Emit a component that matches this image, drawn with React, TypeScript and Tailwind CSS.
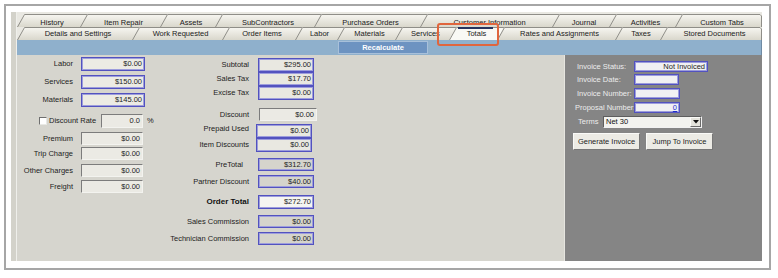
import React from "react";

const FONT = "font-['Liberation_Sans',Arial,sans-serif]";

type TabDef = { label: string; w: number; cls: string };

const ROW1: TabDef[] = [
  { label: "History", w: 63, cls: "w-[63px]" },
  { label: "Item Repair", w: 80, cls: "w-[80px]" },
  { label: "Assets", w: 55, cls: "w-[55px]" },
  { label: "SubContractors", w: 99, cls: "w-[99px]" },
  { label: "Purchase Orders", w: 106, cls: "w-[106px]" },
  { label: "Customer Information", w: 132, cls: "w-[132px]" },
  { label: "Journal", w: 57, cls: "w-[57px]" },
  { label: "Activities", w: 66, cls: "w-[66px]" },
  { label: "Custom Tabs", w: 87, cls: "w-[87px]" },
];

const ROW2: TabDef[] = [
  { label: "Details and Settings", w: 115, cls: "w-[115px]" },
  { label: "Work Requested", w: 90, cls: "w-[90px]" },
  { label: "Order Items", w: 73, cls: "w-[73px]" },
  { label: "Labor", w: 42, cls: "w-[42px]" },
  { label: "Materials", w: 58, cls: "w-[58px]" },
  { label: "Services", w: 54, cls: "w-[54px]" },
  { label: "Totals", w: 48, cls: "w-[48px]" },
  { label: "Rates and Assignments", w: 118, cls: "w-[118px]" },
  { label: "Taxes", w: 45, cls: "w-[45px]" },
  { label: "Stored Documents", w: 102, cls: "w-[102px]" },
];

const S = 7; // slant of the tab's left edge
const H = 13;

function Tab({ t, last, selected, top }: { t: TabDef; last: boolean; selected: boolean; top?: boolean }) {
  const w = t.w;
  const fill = last
    ? `0,${H} ${S},0.5 ${w - 2},0.5 ${w - 0.5},2 ${w - 0.5},${H}`
    : `0,${H} ${S},0.5 ${w + S},0.5 ${w},${H}`;
  const line = last
    ? `0.5,${H} ${S + 0.5},0.5 ${w - 2},0.5 ${w - 0.5},2 ${w - 0.5},${H}`
    : `0.5,${H} ${S + 0.5},0.5 ${w + S},0.5`;
  return (
    <div className={`relative flex h-[13px] shrink-0 justify-center pl-[7px] ${t.cls} ${top ? "items-end pb-[1px]" : "items-center"}`}>
      <svg className="absolute left-0 top-0 overflow-visible" width={w + S} height={H}>
        <polygon points={fill} fill={selected ? "#f9f9f5" : "url(#tabfill)"} />
        <polyline points={line} fill="none" stroke="#8f8e88" strokeWidth="1" />
        {selected && <line x1={S + 2} y1="1" x2={w - 4} y2="1" stroke="#26335e" strokeWidth="2" />}
      </svg>
      <span className="relative whitespace-nowrap leading-none text-[#1b1b1b]">{t.label}</span>
    </div>
  );
}

function TabRow({ tabs, top }: { tabs: TabDef[]; top?: boolean }) {
  return (
    <div className="flex h-[13px]">
      {tabs.map((t, i) => (
        <Tab key={t.label} t={t} last={i === tabs.length - 1} selected={t.label === "Totals"} top={top} />
      ))}
    </div>
  );
}

const BLUE = "border border-[#5252bf] shadow-[inset_0_0_0_1px_#9d9ddc]";
const SUNK = "border border-t-[#7c7c7c] border-l-[#7c7c7c] border-r-[#f3f3ef] border-b-[#f3f3ef] bg-[#ebeae4]";

function Box({ v, cls }: { v?: string; cls: string }) {
  return (
    <div className={`flex shrink-0 items-center justify-end pr-[2px] leading-none text-[#1d1d1d] ${cls}`}>{v}</div>
  );
}

function RowA({ label, v, cls, row }: { label: string; v: string; cls: string; row: string }) {
  return (
    <div className={`flex items-center ${row}`}>
      <span className="w-[56px] whitespace-nowrap text-right leading-none text-[#222]">{label}</span>
      <Box v={v} cls={`ml-[8px] ${cls}`} />
    </div>
  );
}

function RowB({ label, v, cls, row, lab }: { label: string; v: string; cls: string; row: string; lab?: string }) {
  return (
    <div className={`flex items-center ${row}`}>
      <span className={`w-[89px] whitespace-nowrap text-right leading-none text-[#222] ${lab ?? ""}`}>{label}</span>
      <Box v={v} cls={cls} />
    </div>
  );
}

function InvRow({ label, cls, row, children, lab }: { label: string; cls: string; row: string; children?: React.ReactNode; lab?: string }) {
  return (
    <div className={`flex items-center pl-[12px] ${row}`}>
      <span className={`w-[57px] whitespace-nowrap leading-none text-[#ececec] ${lab ?? ""}`}>{label}</span>
      <div className={`flex shrink-0 items-center justify-end pr-[2px] leading-none text-[#1d1d1d] ${BLUE} bg-[#f1f1f3] ${cls}`}>{children}</div>
    </div>
  );
}

export default function App() {
  return (
    <div className={`relative h-[278px] w-[778px] overflow-hidden bg-white pl-[4px] pt-[4px] text-[7.5px] ${FONT}`}>
      <svg className="absolute h-0 w-0">
        <defs>
          <linearGradient id="tabfill" x1="0" y1="0" x2="0" y2="1">
            <stop offset="0" stopColor="#f7f6f1" />
            <stop offset="1" stopColor="#d9d7cc" />
          </linearGradient>
        </defs>
      </svg>

      <div className="h-[266px] w-[767px] border-2 border-[#a6a6a6] pl-[5px] pt-[6px]">
        <div className="flex h-[249px]">
          <div className="w-[5px] bg-[#d3d2ca]" />
          <div className="w-[1px] bg-[#efefeb]" />

          <div className="flex w-[745px] flex-col">
            {/* tab strip */}
            <div className="h-[28px] bg-[#e9e8e2] pt-[2px]">
              <TabRow tabs={ROW1} top />
              <TabRow tabs={ROW2} />
            </div>

            {/* recalculate bar */}
            <div className="h-[15px] border-r border-[#6f8aa3] bg-[#8fb0cc] pl-[321px] pt-[1px]">
              <div className="flex h-[13px] w-[90px] items-center justify-center border border-[#a8c0da] bg-[#6d93c1] font-bold leading-none text-white">
                Recalculate
              </div>
            </div>

            {/* body */}
            <div className="flex h-[206px]">
              <div className="flex flex-1 bg-[#d6d5ce]">
                {/* column A */}
                <div className="flex w-[143px] flex-col">
                  <RowA row="mt-[2px]" label="Labor" v="$0.00" cls={`h-[14px] w-[64px] ${BLUE} bg-[#ecebe4]`} />
                  <RowA row="mt-[4px]" label="Services" v="$150.00" cls={`h-[14px] w-[64px] ${BLUE} bg-[#ecebe4]`} />
                  <RowA row="mt-[4px]" label="Materials" v="$145.00" cls={`h-[14px] w-[64px] ${BLUE} bg-[#ecebe4]`} />
                  <div className="mt-[7px] flex h-[14px] items-center pl-[22px]">
                    <div className="h-[8px] w-[8px] shrink-0 border border-t-[#6f6f6f] border-l-[#6f6f6f] border-r-[#e9e9e5] border-b-[#e9e9e5] bg-white" />
                    <span className="ml-[2px] w-[50px] whitespace-nowrap leading-none text-[#222]">Discount Rate</span>
                    <Box v="0.0" cls={`ml-[2px] h-[14px] w-[42px] ${SUNK}`} />
                    <span className="ml-[4px] leading-none text-[#222]">%</span>
                  </div>
                  <RowA row="mt-[4px]" label="Premium" v="$0.00" cls={`h-[13px] w-[62px] ${SUNK}`} />
                  <RowA row="mt-[2px]" label="Trip Charge" v="$0.00" cls={`h-[13px] w-[62px] ${SUNK}`} />
                  <RowA row="mt-[4px]" label="Other Charges" v="$0.00" cls={`h-[13px] w-[62px] ${SUNK}`} />
                  <RowA row="mt-[3px]" label="Freight" v="$0.00" cls={`h-[13px] w-[62px] ${SUNK}`} />
                </div>

                {/* column B */}
                <div className="flex flex-col">
                  <RowB row="mt-[3px]" label="Subtotal" v="$295.00" cls={`ml-[9px] h-[14px] w-[56px] ${BLUE} bg-[#e9e8e1]`} />
                  <RowB row="" label="Sales Tax" v="$17.70" cls={`ml-[9px] h-[14px] w-[56px] ${BLUE} bg-[#e9e8e1]`} />
                  <RowB row="" label="Excise Tax" v="$0.00" cls={`ml-[9px] h-[14px] w-[56px] ${BLUE} bg-[#e9e8e1]`} />
                  <RowB row="mt-[8px]" label="Discount" v="$0.00" cls={`ml-[10px] h-[13px] w-[58px] ${SUNK}`} />
                  <RowB row="mt-[3px]" label="Prepaid Used" lab="-mt-[4px]" v="$0.00" cls={`ml-[7px] h-[14px] w-[56px] ${BLUE} bg-[#e9e8e1]`} />
                  <RowB row="" label="Item Discounts" v="$0.00" cls={`ml-[7px] h-[14px] w-[56px] ${BLUE} bg-[#e9e8e1]`} />
                  <RowB row="mt-[6px]" label="PreTotal" lab="pr-[6px]" v="$312.70" cls={`ml-[9px] h-[13px] w-[56px] ${BLUE} bg-[#d5d4cc]`} />
                  <RowB row="mt-[4px]" label="Partner Discount" v="$40.00" cls={`ml-[9px] h-[13px] w-[56px] ${BLUE} bg-[#d5d4cc]`} />
                  <div className="mt-[7px] flex items-center">
                    <span className="w-[89px] whitespace-nowrap text-right text-[8px] font-bold leading-none text-[#111]">Order Total</span>
                    <Box v="$272.70" cls={`ml-[9px] h-[14px] w-[56px] ${BLUE} bg-[#f5f5f1]`} />
                  </div>
                  <RowB row="mt-[6px]" label="Sales Commission" v="$0.00" cls={`ml-[9px] h-[13px] w-[56px] ${BLUE} bg-[#d5d4cc]`} />
                  <RowB row="mt-[4px]" label="Technician Commission" v="$0.00" cls={`ml-[9px] h-[13px] w-[56px] ${BLUE} bg-[#d5d4cc]`} />
                </div>
              </div>

              {/* invoice panel */}
              <div className="flex w-[198px] flex-col border-l border-[#e6e5df] bg-[#858585]">
                <InvRow row="mt-[6px]" label="Invoice Status:" cls="h-[11px] w-[74px]">Not Invoiced</InvRow>
                <InvRow row="mt-[2px]" label="Invoice Date:" cls="h-[11px] w-[45px]" />
                <InvRow row="mt-[3px]" label="Invoice Number:" cls="h-[11px] w-[46px]" />
                <InvRow row="mt-[3px]" label="Proposal Number:" lab="-ml-[2px] w-[59px]" cls="h-[11px] w-[46px]">
                  <span className="text-[#1f2fd0] underline">0</span>
                </InvRow>
                <div className="mt-[3px] flex items-center pl-[13px]">
                  <span className="w-[25px] leading-none text-[#ececec]">Terms</span>
                  <div className="flex h-[12px] w-[99px] items-center border border-t-[#5e5e5e] border-l-[#5e5e5e] border-r-[#f2f2f2] border-b-[#f2f2f2] bg-[#f3f3ef]">
                    <span className="flex-1 pl-[2px] leading-none text-[#111]">Net 30</span>
                    <div className="flex h-full w-[11px] items-center justify-center border border-t-[#fbfbf8] border-l-[#fbfbf8] border-r-[#6b6b6b] border-b-[#6b6b6b] bg-[#e4e3dc]">
                      <svg width="6" height="4" viewBox="0 0 6 4">
                        <polygon points="0,0 6,0 3,3.5" fill="#111" />
                      </svg>
                    </div>
                  </div>
                </div>
                <div className="mt-[5px] flex gap-[6px] pl-[8px]">
                  <div className="flex h-[17px] w-[67px] items-center justify-center border border-t-[#fafaf8] border-l-[#fafaf8] border-r-[#777] border-b-[#777] bg-[#ecebe5] leading-none text-[#222]">
                    Generate Invoice
                  </div>
                  <div className="flex h-[17px] w-[67px] items-center justify-center border border-t-[#fafaf8] border-l-[#fafaf8] border-r-[#777] border-b-[#777] bg-[#ecebe5] leading-none text-[#222]">
                    Jump To Invoice
                  </div>
                </div>
              </div>
            </div>
          </div>
        </div>
      </div>

      {/* annotation around the Totals tab */}
      <div className="absolute left-[437px] top-[23px] h-[23px] w-[62px] rounded-[3px] border-2 border-[#e0653d]" />
    </div>
  );
}
